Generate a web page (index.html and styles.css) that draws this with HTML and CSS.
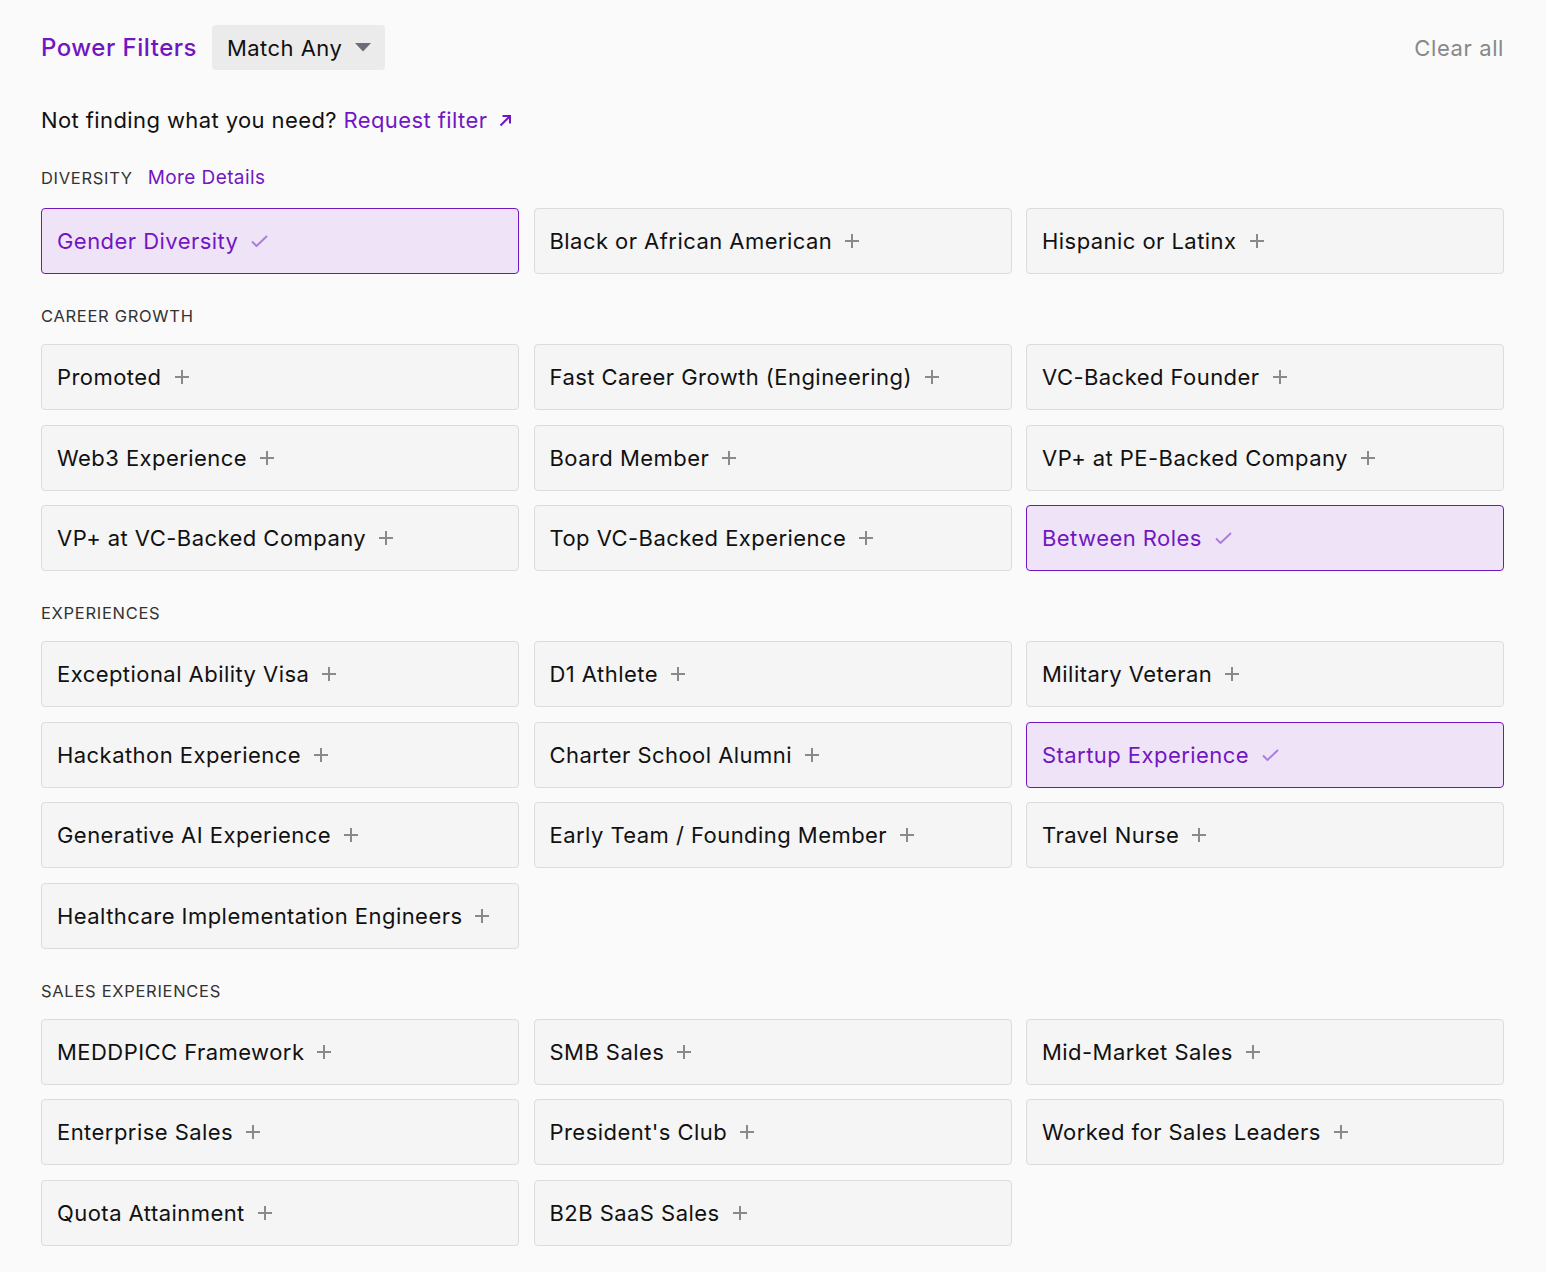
FILE: index.html
```html
<!DOCTYPE html>
<html lang="en">
  <head>
    <meta charset="UTF-8" />
    <meta name="viewport" content="width=device-width, initial-scale=1.0" />
    <title>Power Filters</title>
    <link rel="stylesheet" href="styles.css">
  </head>
  <body>
    <div class="panel">
      <header class="top">
        <div class="top-left">
          <h1>Power Filters</h1>
          <button type="button" class="match">
            Match Any
            <svg width="16" height="9" viewBox="0 0 16 9"><path d="M0 0h16L8 8.5z" fill="#6b6e77"/></svg>
          </button>
        </div>
        <a class="clear" href="#">Clear all</a>
      </header>

      <p class="request">
        Not finding what you need?
        <a href="#">Request filter
          <svg width="15" height="15" viewBox="0 0 15 15"><path d="M2.5 12.5L12 3M4.5 3H12v7.5" fill="none" stroke="#7216c2" stroke-width="2"/></svg>
        </a>
      </p>

      <!-- Diversity -->
      <section class="group">
        <div class="group-title">DIVERSITY <a href="#">More Details</a></div>
        <div class="grid">
          <div class="chip on">Gender Diversity <svg class="check" viewBox="0 0 17 12"><path d="M1 6.5L5.5 11L16 1" /></svg></div>
          <div class="chip">Black or African American <span class="plus"></span></div>
          <div class="chip">Hispanic or Latinx <span class="plus"></span></div>
        </div>
      </section>

      <!-- Career growth -->
      <section class="group">
        <div class="group-title">CAREER GROWTH</div>
        <div class="grid">
          <div class="chip">Promoted <span class="plus"></span></div>
          <div class="chip">Fast Career Growth (Engineering) <span class="plus"></span></div>
          <div class="chip">VC-Backed Founder <span class="plus"></span></div>
          <div class="chip">Web3 Experience <span class="plus"></span></div>
          <div class="chip">Board Member <span class="plus"></span></div>
          <div class="chip">VP+ at PE-Backed Company <span class="plus"></span></div>
          <div class="chip">VP+ at VC-Backed Company <span class="plus"></span></div>
          <div class="chip">Top VC-Backed Experience <span class="plus"></span></div>
          <div class="chip on">Between Roles <svg class="check" viewBox="0 0 17 12"><path d="M1 6.5L5.5 11L16 1" /></svg></div>
        </div>
      </section>

      <!-- Experiences -->
      <section class="group">
        <div class="group-title">EXPERIENCES</div>
        <div class="grid">
          <div class="chip">Exceptional Ability Visa <span class="plus"></span></div>
          <div class="chip">D1 Athlete <span class="plus"></span></div>
          <div class="chip">Military Veteran <span class="plus"></span></div>
          <div class="chip">Hackathon Experience <span class="plus"></span></div>
          <div class="chip">Charter School Alumni <span class="plus"></span></div>
          <div class="chip on">Startup Experience <svg class="check" viewBox="0 0 17 12"><path d="M1 6.5L5.5 11L16 1" /></svg></div>
          <div class="chip">Generative AI Experience <span class="plus"></span></div>
          <div class="chip">Early Team / Founding Member <span class="plus"></span></div>
          <div class="chip">Travel Nurse <span class="plus"></span></div>
          <div class="chip">Healthcare Implementation Engineers <span class="plus"></span></div>
        </div>
      </section>

      <!-- Sales experiences -->
      <section class="group">
        <div class="group-title">SALES EXPERIENCES</div>
        <div class="grid">
          <div class="chip">MEDDPICC Framework <span class="plus"></span></div>
          <div class="chip">SMB Sales <span class="plus"></span></div>
          <div class="chip">Mid-Market Sales <span class="plus"></span></div>
          <div class="chip">Enterprise Sales <span class="plus"></span></div>
          <div class="chip">President's Club <span class="plus"></span></div>
          <div class="chip">Worked for Sales Leaders <span class="plus"></span></div>
          <div class="chip">Quota Attainment <span class="plus"></span></div>
          <div class="chip">B2B SaaS Sales <span class="plus"></span></div>
        </div>
      </section>
    </div>
  </body>
</html>
```

FILE: styles.css
```css
body {
  font-family: Inter, "Noto Sans", sans-serif;
  background-color: #fafafa;
  color: #111;
  margin: 0;
}

.panel {
  padding: 25px 42px 30px 41px;
}

/* Top bar */
.top {
  display: flex;
  justify-content: space-between;
  align-items: center;
}

.top-left {
  display: flex;
  align-items: center;
  gap: 15px;
}

h1 {
  font-size: 24px;
  font-weight: 500;
  letter-spacing: 0.5px;
  color: #7216c2;
  margin: 0;
}

.match {
  display: flex;
  align-items: center;
  gap: 13px;
  height: 45px;
  padding: 0 14px 0 15px;
  background-color: #ebebeb;
  border: none;
  border-radius: 4px;
  font-family: inherit;
  font-size: 22px;
  letter-spacing: 0.45px;
  color: #111;
}

.clear {
  font-size: 22px;
  letter-spacing: 0.6px;
  color: #888;
  text-decoration: none;
}

/* Request line */
.request {
  font-size: 22px;
  letter-spacing: 0.4px;
  line-height: 28px;
  margin: 36px 0 0;
}

.request a {
  color: #7216c2;
  text-decoration: none;
}

.request svg {
  margin-left: 4px;
}

/* Groups */
.group {
  margin-top: 32px;
}

.group-title {
  display: flex;
  align-items: center;
  gap: 15px;
  min-height: 20px;
  font-size: 16.5px;
  letter-spacing: 0.7px;
  color: #333;
  margin-bottom: 18px;
}

.group-title a {
  font-size: 19px;
  letter-spacing: 0.4px;
  line-height: 24px;
  color: #7216c2;
  text-decoration: none;
}

.grid {
  display: grid;
  grid-template-columns: repeat(3, 1fr);
  column-gap: 14.5px;
  row-gap: 14.5px;
}

.chip {
  display: flex;
  align-items: center;
  gap: 13px;
  height: 66px;
  box-sizing: border-box;
  padding: 0 15px;
  background-color: #f5f5f5;
  border: 1px solid #dcdcdc;
  border-radius: 4px;
  font-size: 22px;
  letter-spacing: 0.45px;
}

.chip.on {
  background-color: #efe4f7;
  border-color: #7216c2;
  color: #7216c2;
}

/* Plus icon */
.plus {
  position: relative;
  width: 14px;
  height: 14px;
}

.plus::before,
.plus::after {
  content: "";
  position: absolute;
  background-color: #8a8a8a;
}

.plus::before {
  left: 0;
  top: 6px;
  width: 14px;
  height: 2px;
}

.plus::after {
  left: 6px;
  top: 0;
  width: 2px;
  height: 14px;
}

/* Check icon */
.check {
  width: 17px;
  height: 12px;
  fill: none;
  stroke: #ab7fdb;
  stroke-width: 2;
}
```
